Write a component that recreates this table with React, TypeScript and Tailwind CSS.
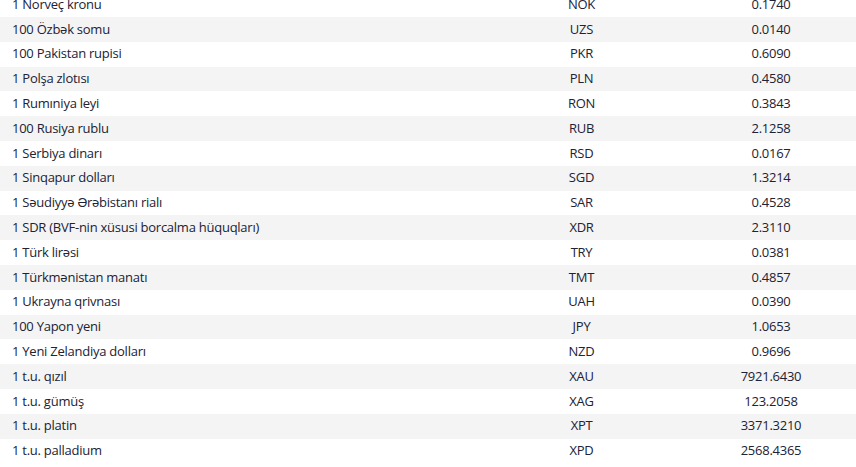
const rates = [
  { name: '1 Norveç kronu', code: 'NOK', value: '0.1740' },
  { name: '100 Özbək somu', code: 'UZS', value: '0.0140' },
  { name: '100 Pakistan rupisi', code: 'PKR', value: '0.6090' },
  { name: '1 Polşa zlotısı', code: 'PLN', value: '0.4580' },
  { name: '1 Rumıniya leyi', code: 'RON', value: '0.3843' },
  { name: '100 Rusiya rublu', code: 'RUB', value: '2.1258' },
  { name: '1 Serbiya dinarı', code: 'RSD', value: '0.0167' },
  { name: '1 Sinqapur dolları', code: 'SGD', value: '1.3214' },
  { name: '1 Səudiyyə Ərəbistanı rialı', code: 'SAR', value: '0.4528' },
  { name: '1 SDR (BVF-nin xüsusi borcalma hüquqları)', code: 'XDR', value: '2.3110' },
  { name: '1 Türk lirəsi', code: 'TRY', value: '0.0381' },
  { name: '1 Türkmənistan manatı', code: 'TMT', value: '0.4857' },
  { name: '1 Ukrayna qrivnası', code: 'UAH', value: '0.0390' },
  { name: '100 Yapon yeni', code: 'JPY', value: '1.0653' },
  { name: '1 Yeni Zelandiya dolları', code: 'NZD', value: '0.9696' },
  { name: '1 t.u. qızıl', code: 'XAU', value: '7921.6430' },
  { name: '1 t.u. gümüş', code: 'XAG', value: '123.2058' },
  { name: '1 t.u. platin', code: 'XPT', value: '3371.3210' },
  { name: '1 t.u. palladium', code: 'XPD', value: '2568.4365' },
];

export default function App() {
  return (
    <div className="h-[467px] w-[856px] overflow-hidden bg-white font-['Open_Sans',sans-serif] text-[13px] tracking-[-0.25px] text-[#212234]">
      <div className="-mt-[7.8px]">
        {rates.map((r, i) => (
          <div
            key={r.code}
            className={`grid h-[24.8px] grid-cols-[477px_209px_1fr] items-center ${i % 2 === 1 ? 'bg-[#f4f4f4]' : 'bg-white'}`}
          >
            <div className="pl-3">{r.name}</div>
            <div className="text-center">{r.code}</div>
            <div className="text-center">{r.value}</div>
          </div>
        ))}
      </div>
    </div>
  );
}
